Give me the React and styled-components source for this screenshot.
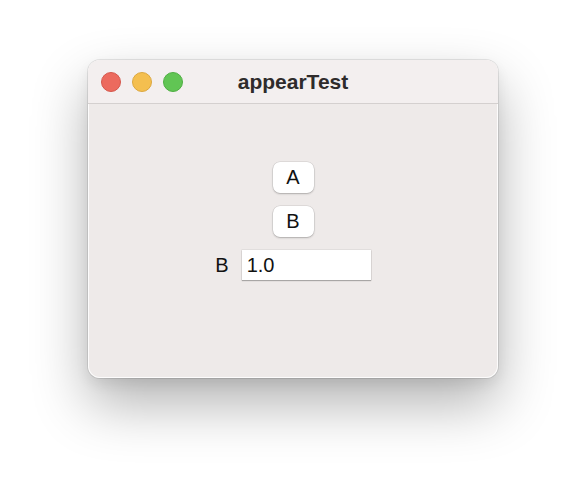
import React from "react";
import styled, { createGlobalStyle } from "styled-components";

const GlobalStyle = createGlobalStyle`
  body {
    margin: 0;
    background: #ffffff;
    font-family: "Liberation Sans", Arial, sans-serif;
  }
`;

const Stage = styled.div`
  padding: 60px 88px 0;
  height: 494px;
  box-sizing: border-box;
`;

const Window = styled.div`
  width: 410px;
  height: 318px;
  border-radius: 12px;
  background: #eeeae9;
  overflow: hidden;
  display: flex;
  flex-direction: column;
  box-shadow: 0 0 0 1px rgba(0, 0, 0, 0.09), inset 0 0 0 1px rgba(255, 255, 255, 0.85),
    0 26px 56px rgba(0, 0, 0, 0.3), 0 6px 14px rgba(0, 0, 0, 0.07);
`;

const TitleBar = styled.div`
  height: 44px;
  flex: none;
  box-sizing: border-box;
  display: grid;
  grid-template-columns: 1fr auto 1fr;
  align-items: center;
  padding: 0 13px;
  background: #f3efef;
  border-bottom: 1px solid #d4d0cf;
`;

const Lights = styled.div`
  display: flex;
  gap: 11px;
`;

const Light = styled.span`
  width: 20px;
  height: 20px;
  border-radius: 50%;
  box-sizing: border-box;
  background: ${(p) => p.$fill};
  border: 1px solid ${(p) => p.$edge};
`;

const Title = styled.div`
  font-size: 21px;
  font-weight: bold;
  color: #2e2b2b;
`;

const Content = styled.div`
  flex: 1;
  display: flex;
  flex-direction: column;
  align-items: center;
  padding-top: 58px;
  gap: 13px;
`;

const Button = styled.button`
  width: 41px;
  height: 31px;
  padding: 0;
  border: none;
  border-radius: 7px;
  background: #ffffff;
  box-shadow: 0 0 0 0.5px rgba(0, 0, 0, 0.12), 0 1px 2px rgba(0, 0, 0, 0.22);
  font-family: "Liberation Sans", Arial, sans-serif;
  font-size: 20px;
  color: #111;
`;

const Row = styled.div`
  display: flex;
  align-items: center;
  gap: 13px;
`;

const Label = styled.span`
  font-size: 20px;
  color: #111;
`;

const Field = styled.input`
  width: 129px;
  height: 30px;
  box-sizing: border-box;
  border: none;
  outline: none;
  padding: 0 5px;
  background: #ffffff;
  box-shadow: 0 0 0 0.5px rgba(0, 0, 0, 0.1), 0 1px 1px rgba(0, 0, 0, 0.25);
  font-family: "Liberation Sans", Arial, sans-serif;
  font-size: 20px;
  color: #111;
`;

export default function App() {
  return (
    <Stage>
      <GlobalStyle />
      <Window>
        <TitleBar>
          <Lights>
            <Light $fill="#ec6a5e" $edge="#d4574c" />
            <Light $fill="#f4bf4f" $edge="#dba73f" />
            <Light $fill="#61c554" $edge="#4fae43" />
          </Lights>
          <Title>appearTest</Title>
          <div />
        </TitleBar>
        <Content>
          <Button>A</Button>
          <Button>B</Button>
          <Row>
            <Label>B</Label>
            <Field defaultValue="1.0" />
          </Row>
        </Content>
      </Window>
    </Stage>
  );
}
